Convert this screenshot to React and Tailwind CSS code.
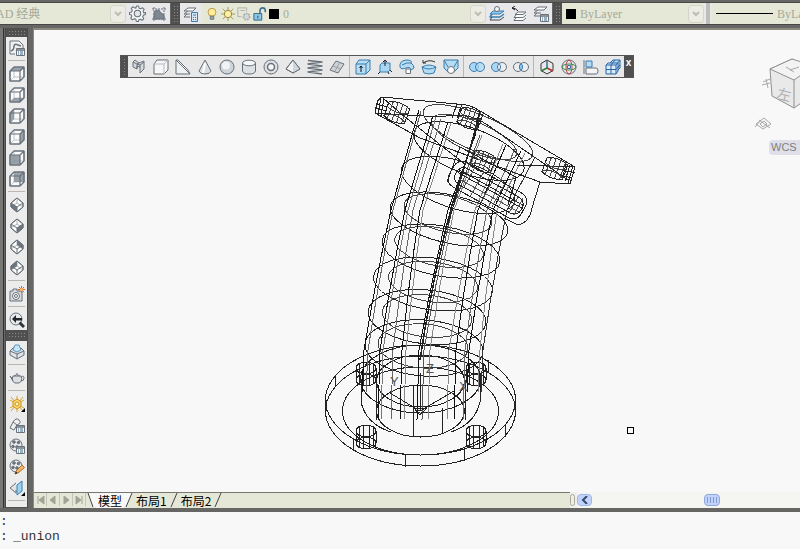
import React, { useState } from "react";

const STEEL = "#68717a";
const BLUE = "#3a7dae";

/* ---------- small toolbar icons, all on a 16x16 grid ---------- */

function Icon({ children, size = "size-4" }) {
  return (
    <svg className={`${size} shrink-0`} viewBox="0 0 16 16" fill="none" stroke={STEEL} strokeLinejoin="round" aria-hidden="true">
      {children}
    </svg>
  );
}

const FACES = {
  top: "M1 5L5 1H15L11 5Z",
  bottom: "M1 15L5 11H15L11 15Z",
  left: "M1 5L5 1V11L1 15Z",
  right: "M11 5L15 1V11L11 15Z",
  front: "M1 5H11V15H1Z",
  back: "M5 1H15V11H5Z",
};

function CubeIcon({ face }) {
  return (
    <Icon>
      <path d="M1 5L5 1H15V11L11 15H1Z" fill="#fbfbfb" />
      <path d="M5 1V11H15M5 11L1 15" stroke="#c0c5c9" />
      <path d={FACES[face]} fill="#87919a" fillOpacity="0.85" stroke="none" />
      <path d="M1 5L5 1H15V11L11 15H1ZM1 5H11V15M11 5L15 1" strokeWidth="1.2" />
    </Icon>
  );
}

const ISO_FACES = {
  sw: "M2 6L8 10V15L2 10Z",
  se: "M8 10L14 6V10L8 15Z",
  ne: "M8 1L14 6V10L8 6Z",
  nw: "M8 1L2 6V10L8 6Z",
};

function IsoIcon({ face }) {
  return (
    <Icon>
      <path d="M8 1L14 6V10L8 15L2 10V6Z" fill="#fbfbfb" />
      <path d="M2 10L8 6L14 10M8 1V6" stroke="#b4b9be" />
      <path d={ISO_FACES[face]} fill="#6d7780" stroke="none" />
      <path d="M8 1L14 6V10L8 15L2 10V6ZM2 6L8 10L14 6M8 10V15" />
    </Icon>
  );
}

const gear = (
  <>
    <path d="M7 1h2l.5 2 1.5.6 1.8-1 1.5 1.500-1 1.800.6 1.500L15.500 7v2l-2 .6-.6 1.400 1 1.900-1.500 1.500-1.800-1-1.500.6L9 15.500H7l-.6-2-1.400-.6-1.900 1-1.500-1.500 1-1.800-.6-1.500L.5 9V7l2-.5L3.100 5l-1-1.800 1.500-1.500 1.800 1L6.500 3z" fill="#f3f4f5" />
    <circle cx="8" cy="8" r="3" fill="#e4e6ea" />
  </>
);

const globe = (
  <>
    <circle cx="7" cy="7" r="6" fill="#e8eaec" />
    <circle cx="5" cy="4" r="1.300" fill={STEEL} />
    <circle cx="9.500" cy="4.500" r="1.300" fill={STEEL} />
    <circle cx="4" cy="8.500" r="1.300" fill={STEEL} />
    <circle cx="8" cy="9" r="1.300" fill={STEEL} />
  </>
);

const card = (
  <>
    <rect x="7.500" y="8.500" width="8" height="7" fill="#f5f7f8" />
    <path d="M7.500 10H15.500" strokeWidth="1.500" />
    <path d="M9 12H10M11 12H14M9 14H10M11 14H14" stroke="#3d6d8f" />
  </>
);

const ICONS = {
  gear: <Icon size="size-[17px]">{gear}</Icon>,
  workspace: (
    <Icon>
      <path d="M3 1V15M13 1V15M1 3H15M1 13H15" strokeDasharray="2 1" />
      <path d="M3 13V7Q4 4 7 4Q9 4 9 6L13 9V13Z" fill="#7c8790" />
    </Icon>
  ),
  layerProps: (
    <Icon>
      <path d="M5 2H13L10 5H1ZM1 8H7M5 5L1 8M1 11H7M4 8L1 11" fill="#fff" />
      <rect x="8.500" y="6.500" width="6" height="9" fill="#d5e6f2" stroke={BLUE} />
      <path d="M10 9H13M10 11.500H11M12 11.500H13M10 13.500H11M12 13.500H13" stroke={BLUE} />
    </Icon>
  ),
  bulb: (
    <Icon size="size-3.5">
      <circle cx="8" cy="6" r="4.500" fill="#ffef9a" stroke="#b7903c" />
      <path d="M6 10.500H10V14H6Z" fill="#a0a6ab" />
    </Icon>
  ),
  sun: (
    <Icon size="size-3.5">
      <path d="M8 0V16M0 8H16M2 2L14 14M14 2L2 14" stroke="#a69045" />
      <circle cx="8" cy="8" r="4.200" fill="#fff0a0" stroke="#8d7a3a" />
    </Icon>
  ),
  viewport: (
    <Icon size="size-3.5">
      <path d="M1 1H11V5M1 1V11H5M4 4H9" stroke="#a8acb0" />
      <circle cx="11" cy="11" r="3.500" fill="#d7d9dc" stroke="#a8acb0" strokeDasharray="2 1" strokeWidth="2" />
    </Icon>
  ),
  lock: (
    <Icon size="size-3.5">
      <path d="M8 8V4Q8 1 11 1T14 4V6" stroke="#3f7290" strokeWidth="1.800" />
      <rect x="1" y="7.500" width="9" height="7.500" fill="#8cc6e8" stroke="#285c7a" />
      <path d="M5.500 10V13" stroke="#173e57" />
    </Icon>
  ),
  layerCurrent: (
    <Icon>
      <path d="M4 5H15L11 8H1Z" fill="#8ccaf0" stroke={BLUE} />
      <path d="M3 8L1 11H11L15 8" stroke={BLUE} strokeWidth="1.500" />
      <path d="M3 11L1 14H11L15 11" stroke="#3c4a55" />
      <circle cx="8" cy="3" r="2.500" fill="#eef6fb" />
    </Icon>
  ),
  layerPrev: (
    <Icon>
      <path d="M7 6H15L12 8.500H4ZM5 9L3 11.500H12L15 9M5 12L3 14.500H12L15 12" fill="#fff" />
      <path d="M7 5Q5 2 1 2M1 2L4 0M1 2L4 4" stroke="#222" />
    </Icon>
  ),
  layerState: (
    <Icon>
      <path d="M5 1H14L11 4H1ZM1 7H8M1 10H7M5 4L1 7M4 7L1 10" fill="#fff" />
      {card}
    </Icon>
  ),
  namedViews: (
    <Icon>
      <path d="M1 1H10L14 5V8M1 1V14H6" fill="#f4f6f5" />
      <path d="M2 11Q5 10 5 6Q6 3 9 5L12 6" strokeWidth="1.500" />
      {card}
    </Icon>
  ),
  camera: (
    <Icon>
      <path d="M1 5H4V3H8V5H13V15H1Z" fill="#d9dcde" />
      <circle cx="7" cy="10" r="3.500" fill="#fafafa" />
      <circle cx="7" cy="10" r="1.500" />
      <path d="M12.500 0V7M9 3.500H16M10 1L15 6M15 1L10 6" stroke="#d0672f" />
      <circle cx="12.500" cy="3.500" r="1.500" fill="#ffc36a" stroke="none" />
    </Icon>
  ),
  back: (
    <Icon>
      <circle cx="7" cy="7" r="6" fill="#e7eaec" />
      <path d="M3 7L7 3V6H13V8.500H7V11Z" fill="#20282e" stroke="none" />
      <path d="M10.500 10.500L15 15" stroke="#2c3339" strokeWidth="3" />
    </Icon>
  ),
  hide: (
    <Icon>
      <path d="M1 7L4 4H12L15 7V11L8 15L1 11Z" fill="#dfe3e6" />
      <path d="M4 6L6 1H10L12 6L8 8Z" fill="#c8e5f6" stroke="#5b98bd" />
      <path d="M1 7L8 10L15 7M8 10V15" />
    </Icon>
  ),
  teapot: (
    <Icon>
      <path d="M4 6H12Q14 11 10 13H6Q2 11 4 6Z" fill="#dcdfe1" />
      <path d="M4 9L1 6M12 7Q15 5 15 8T12 11M5 6Q8 3 11 6M8 4V3M1 6L4 11" />
    </Icon>
  ),
  light: (
    <Icon>
      <path d="M8 0V16M1 4L15 12M15 4L1 12M2 1L14 15M14 1L2 15" stroke="#dba532" />
      <path d="M8 3L12 5.500V10.500L8 13L4 10.500V5.500Z" fill="#ffd968" stroke="#c99325" />
      <circle cx="8" cy="8" r="2" fill="#fff8c8" stroke="#c99325" />
      <path d="M16 12V16H12Z" fill="#000" stroke="none" />
    </Icon>
  ),
  lightList: (
    <Icon>
      <path d="M1 11L4 5Q7 0 10 3T8 8L5 13Z" fill="#eceeef" />
      <path d="M4 5L8 8" />
      {card}
    </Icon>
  ),
  materials: <Icon>{globe}{card}</Icon>,
  materialEdit: (
    <Icon>
      {globe}
      <path d="M6 15L7 12L13 6L15.500 8.500L9 14Z" fill="#f3b568" stroke="#a9702c" />
      <path d="M6 15L7 12.500L8.500 14Z" fill="#222" stroke="none" />
    </Icon>
  ),
  mapping: (
    <Icon>
      <path d="M7 3L1 8L7 13V10" fill="#dfe3e6" />
      <path d="M8 5L13 1V11L8 15Z" fill="#9ed4f3" stroke={BLUE} />
      <path d="M16 12V16H12Z" fill="#000" stroke="none" />
    </Icon>
  ),
  polysolid: (
    <Icon>
      <path d="M2 3L4 1L8 4L13 2V10L9 14V8L6 7V10L2 8Z" fill="#d5d9dc" />
      <path d="M2 3L6 5V10M6 5L8 4M9 8L9 6L13 3M9 6L6 5" />
    </Icon>
  ),
  box: (
    <Icon>
      <path d="M1 5L4 1H15V11L11 15H1Z" fill="#f6f7f8" />
      <path d="M11 5H1M11 5V15M11 5L15 1" stroke="#b5bac0" />
    </Icon>
  ),
  wedge: <Icon><path d="M1 1V15H15L13 11L3 1ZM1 1L15 15" fill="#eef0f1" /></Icon>,
  cone: <Icon><path d="M8 1L2 12Q3 15 8 15T14 12Z" fill="#d9dde0" /><path d="M8 4L6 14" stroke="#fff" strokeWidth="2" /></Icon>,
  sphere: <Icon><circle cx="8" cy="8" r="7" fill="#cfd5da" /><circle cx="7" cy="6.500" r="4" fill="#f1f3f4" stroke="none" /></Icon>,
  cylinder: <Icon><path d="M1.500 4V12Q2 15 8 15T14.500 12V4" fill="#dde1e4" /><ellipse cx="8" cy="4" rx="6.500" ry="2.800" fill="#f7f8f8" /></Icon>,
  torus: <Icon><circle cx="8" cy="8" r="7" fill="#e0e3e6" /><circle cx="8" cy="8" r="3.500" fill="#f8f8f8" strokeWidth="1.500" /></Icon>,
  pyramid: <Icon><path d="M8 1L1 10L8 14L15 10Z" fill="#f0f2f3" /><path d="M8 1L8 14L15 10Z" fill="#d0d5d9" stroke="none" /><path d="M8 1L1 10L8 14L15 10Z" /></Icon>,
  helix: <Icon><path d="M1 1.500L15 3L1 5L15 7L1 9L15 11L1 13L15 15" strokeWidth="1.500" /></Icon>,
  planar: <Icon><path d="M1 11L7 2L15 5L9 14Z" fill="#cfd3d6" /><path d="M4 7L12 10M6 12L11 3" stroke="#9aa1a7" /></Icon>,
  extrude: (
    <Icon>
      <path d="M1 5L4 1H15V11L11 15H1Z" fill="#b5dcf3" stroke={BLUE} />
      <path d="M1 5H11V15M11 5L15 1" stroke={BLUE} />
      <path d="M6 13V7M4.500 9L6 7L7.500 9" stroke="#112" />
    </Icon>
  ),
  presspull: (
    <Icon>
      <path d="M3 6L5 4H13V11L11 13H3Z" fill="#a9d6f1" stroke={BLUE} />
      <path d="M8 7V1M6 3L8 1L10 3" stroke="#223" />
      <path d="M3 13L1 15M11 13L12 15M13 11L15 13" stroke="#223" />
    </Icon>
  ),
  sweep: (
    <Icon>
      <path d="M1 8Q0 2 7 1Q14 1 12 4Q15 6 15 9L12 11Q11 7 7 9Q2 11 1 8Z" fill="#b5dcf3" stroke={BLUE} />
      <path d="M3 6Q8 3 12 4" stroke={BLUE} />
      <rect x="7" y="10" width="4.500" height="4.500" fill="#fff" />
    </Icon>
  ),
  revolve: (
    <Icon>
      <path d="M1 8Q8 4 15 8L13 14Q8 16 3 14Z" fill="#b5dcf3" stroke={BLUE} />
      <path d="M1 8Q8 12 15 8" stroke={BLUE} />
      <path d="M2 4Q8 0 14 3M2 4V1M2 4L5 4" stroke="#333" />
    </Icon>
  ),
  loft: (
    <Icon>
      <path d="M1 1H15V9L11 13H5L1 9Z" fill="#b5dcf3" stroke={BLUE} />
      <path d="M1 1L5 8M15 1L11 8" stroke={BLUE} />
      <circle cx="8" cy="11" r="3.500" fill="#fff" />
    </Icon>
  ),
  union: (
    <Icon>
      <circle cx="5" cy="8" r="4.500" fill="#a9d8f5" stroke={BLUE} />
      <circle cx="11" cy="8" r="4.500" fill="#a9d8f5" fillOpacity="0.700" stroke={BLUE} />
    </Icon>
  ),
  subtract: (
    <Icon>
      <circle cx="5" cy="8" r="4.500" fill="#a9d8f5" stroke={BLUE} />
      <circle cx="11" cy="8" r="4.500" fill="#ecedef" />
      <path d="M8 4.600A4.500 4.500 0 0 1 8 11.400" stroke={BLUE} />
    </Icon>
  ),
  intersect: (
    <Icon>
      <circle cx="5" cy="8" r="4.500" fill="#ecedef" />
      <circle cx="11" cy="8" r="4.500" fill="#ecedef" />
      <path d="M8 4.600A4.500 4.500 0 0 1 8 11.400A4.500 4.500 0 0 1 8 4.600" fill="#8cccf5" stroke={BLUE} />
    </Icon>
  ),
  move3d: (
    <Icon>
      <path d="M8 1L14 4.500V11.500L8 15L2 11.500V4.500Z" stroke="#333" />
      <path d="M8 9V2" stroke="#2f6f9f" strokeWidth="1.500" />
      <path d="M8 9L2 12" stroke="#2f7d3a" strokeWidth="1.500" />
      <path d="M8 9L14 12" stroke="#b03030" strokeWidth="1.500" />
    </Icon>
  ),
  rotate3d: (
    <Icon>
      <circle cx="8" cy="8" r="7" />
      <ellipse cx="8" cy="8" rx="3" ry="7" stroke="#c04343" />
      <ellipse cx="8" cy="8" rx="7" ry="3" stroke="#3c8a4a" />
      <rect x="6.500" y="6.500" width="3" height="3" stroke="#3d6fa8" />
    </Icon>
  ),
  align3d: (
    <Icon>
      <path d="M1 1V15M3 9H13Q15 9 15 12T13 15H3Z" fill="#f3f4f5" />
      <rect x="3" y="2" width="6" height="6" fill="#b5dcf3" stroke={BLUE} />
    </Icon>
  ),
  array3d: (
    <Icon>
      <path d="M5 4L8 1H15V9L12 12" fill="#b5dcf3" stroke="#2b62a5" />
      <path d="M1 6L3 4H13V12L11 15H1Z" fill="#d8ebf8" stroke="#2b62a5" />
      <path d="M1 6H11V15M11 6L15 1M1 10.500H11L15 6M6 6V15M6 6L10 1" stroke="#2b62a5" />
    </Icon>
  ),
};

/* ---------- toolbar pieces ---------- */

const Grip = ({ className }) => (
  <div className={`flex shrink-0 items-center justify-center bg-[#505050] ${className}`}>
    <div className="size-full border-2 border-[#505050] bg-[radial-gradient(#8a8a8a_1px,transparent_1px)] bg-[size:3px_3px]" />
  </div>
);

function Tool({ label, className = "", children }) {
  return (
    <button type="button" title={label} aria-label={label} className={`flex shrink-0 items-center justify-center hover:bg-white ${className}`}>
      {children}
    </button>
  );
}

function Combo({ label, options, className = "", lead, arrow = true }) {
  return (
    <div className={`flex h-full items-center overflow-hidden bg-[#e5e8d7] ${className}`}>
      {lead}
      <select
        aria-label={label}
        className="min-w-12 flex-1 appearance-none bg-transparent font-['Liberation_Serif','Noto_Sans_CJK_SC',serif] text-xs text-[#a5a897] outline-none"
      >
        {options.map((o) => <option key={o}>{o}</option>)}
      </select>
      {arrow && (
        <span className="flex h-[18px] w-4 shrink-0 items-center justify-center rounded-sm border border-[#d5d5cb] bg-[#ecece4]">
          <svg className="w-2" viewBox="0 0 8 6" fill="none" stroke="#bcbcb0" strokeWidth="2"><path d="M1 1L4 4L7 1" /></svg>
        </span>
      )}
    </div>
  );
}

function TopBar() {
  return (
    <header className="flex h-7 shrink-0 items-start overflow-hidden bg-[#666665] pt-0.5">
      <div className="flex h-[23px] w-full border-y border-[#484848]">
        <div className="flex w-[170px] shrink-0 bg-[#e8e8ea]">
          <Combo label="Workspace" options={["AD 经典"]} className="-ml-1 w-[130px]" />
          <Tool label="Workspace settings" className="w-[22px]">{ICONS.gear}</Tool>
          <Tool label="My workspace" className="w-[22px]">{ICONS.workspace}</Tool>
        </div>
        <Grip className="ml-px w-[9px]" />
        <div className="flex w-[372px] shrink-0 bg-[#e8e8ea]">
          <Tool label="Layer properties" className="w-[22px]">{ICONS.layerProps}</Tool>
          <Combo
            label="Layer"
            options={["0"]}
            className="flex-1 pl-[3px]"
            lead={
              <span className="mr-1 flex items-center gap-0.5">
                {ICONS.bulb}{ICONS.sun}{ICONS.viewport}{ICONS.lock}
                <span className="size-2.5 bg-black" />
              </span>
            }
          />
          <Tool label="Make layer current" className="w-[22px]">{ICONS.layerCurrent}</Tool>
          <Tool label="Layer previous" className="w-[22px]">{ICONS.layerPrev}</Tool>
          <Tool label="Layer states" className="w-[22px]">{ICONS.layerState}</Tool>
        </div>
        <Grip className="ml-px w-[9px]" />
        <Combo
          label="Color"
          options={["ByLayer"]}
          className="w-[142px] shrink-0 pl-1"
          lead={<span className="mr-1 size-2.5 bg-black" />}
        />
        <div className="w-2 shrink-0 border-x-2 border-[#e8e8ea] bg-[#bdbdba]" />
        <Combo
          label="Linetype"
          options={["ByLayer"]}
          arrow={false}
          className="min-w-0 flex-1 pl-1"
          lead={<span className="mr-1 h-px w-[57px] shrink-0 bg-black" />}
        />
      </div>
    </header>
  );
}

const VIEW_TOOLS = [
  ["Named views", ICONS.namedViews],
  null,
  ["Top", <CubeIcon face="top" />],
  ["Bottom", <CubeIcon face="bottom" />],
  ["Left", <CubeIcon face="left" />],
  ["Right", <CubeIcon face="right" />],
  ["Front", <CubeIcon face="front" />],
  ["Back", <CubeIcon face="back" />],
  null,
  ["SW isometric", <IsoIcon face="sw" />],
  ["SE isometric", <IsoIcon face="se" />],
  ["NE isometric", <IsoIcon face="ne" />],
  ["NW isometric", <IsoIcon face="nw" />],
  null,
  ["Create camera", ICONS.camera],
  null,
  ["Previous view", ICONS.back],
];

const RENDER_TOOLS = [
  ["Hide", ICONS.hide],
  null,
  ["Render", ICONS.teapot],
  null,
  ["Lights", ICONS.light],
  ["Light list", ICONS.lightList],
  ["Materials", ICONS.materials],
  ["Material editor", ICONS.materialEdit],
  ["Mapping", ICONS.mapping],
  null,
];

function ToolColumn({ tools }) {
  return (
    <div className="flex flex-col bg-[#ececed]">
      {tools.map((t, i) =>
        t ? (
          <Tool key={i} label={t[0]} className="h-[21px] w-full">{t[1]}</Tool>
        ) : (
          <div key={i} className="mx-0.5 my-0.5 h-px bg-[#b9b8ae]" />
        )
      )}
    </div>
  );
}

function SideBar() {
  return (
    <aside className="flex shrink-0 bg-[#666665]">
      <div className="mr-px w-1 border-r border-[#333] bg-[#777776]" />
      <div className="w-[23px] overflow-hidden border-x border-[#4a4a4a]">
        <Grip className="h-[9px]" />
        <ToolColumn tools={VIEW_TOOLS} />
        <Grip className="h-[11px]" />
        <ToolColumn tools={RENDER_TOOLS} />
        <div className="h-1 bg-[#ececed]" />
        <Grip className="h-2" />
      </div>
      <div className="w-[5px]" />
    </aside>
  );
}

const MODEL_TOOLS = [
  ["polysolid", "box", "wedge", "cone", "sphere", "cylinder", "torus", "pyramid", "helix", "planar"],
  ["extrude", "presspull", "sweep", "revolve", "loft"],
  ["union", "subtract", "intersect"],
  ["move3d", "rotate3d", "align3d", "array3d"],
];

function ModelingToolbar() {
  return (
    <div className="absolute top-[25px] left-[86px] flex h-[23px] border border-[#555] bg-[#e8e8e9]">
      <Grip className="w-[7px]" />
      {MODEL_TOOLS.map((group, i) => (
        <React.Fragment key={i}>
          {i > 0 && <div className="mr-0.5 ml-px w-px bg-[#bdb9a6]" />}
          {group.map((name) => (
            <Tool key={name} label={name} className="w-[22px]">{ICONS[name]}</Tool>
          ))}
        </React.Fragment>
      ))}
      <button type="button" aria-label="Close" className="w-[9px] bg-[#505050] pb-2 font-['Liberation_Sans',sans-serif] text-[10px] leading-3 font-bold text-white">
        x
      </button>
    </div>
  );
}

/* ---------- wireframe model ---------- */

// centre x, centre y, radius, half height, tilt
const RINGS = [
  [469, 151, 58, 23, 20], [458, 185, 59, 24, 17], [449, 219, 60, 24, 13],
  [441, 251, 60, 25, 11], [433, 284, 60, 26, 8], [427, 317, 59, 27, 6], [424, 348, 59, 28, 4],
];

const INNER_RINGS = [
  [448, 214, 45, 18, 13], [439, 247, 45, 19, 11],
  [433, 282, 45, 20, 8], [427, 316, 45, 21, 6], [423, 346, 45, 22, 4],
  [478, 133, 59, 18, 23], [474, 137, 46, 15, 23],
];

// x of each generator line at y=210 and y=350, and its tone
const GENERATORS = [
  [391, 364, "#111"], [393, 368, "#666"], [405, 380, "#111"], [408, 383, "#777"], [413, 393, "#666"], [420, 402, "#111"],
  [423, 406, "#888"], [448, 419, "#111"], [452, 424, "#555"], [454, 430, "#888"], [475, 449, "#888"],
  [478, 456, "#111"], [487, 465, "#666"], [493, 469, "#111"], [497, 480, "#888"], [507, 483, "#333"],
];

const HOLES = [[366, 368], [476, 368], [366, 431], [476, 431]];

function generatorPath([a, b]) {
  const top = a + 28;
  const topY = Math.round(111 + (top - 421) * 0.4);
  const foot = Math.round(b - (a - b) * 0.12);
  const footY = foot > 375 && foot < 466 ? 420 : 392;
  return `M${top} ${topY}L${a} 210Q${Math.round((a + b) / 2) - 2} 278 ${b} 350L${b - 2} ${footY}`;
}

function BoltHole({ x, y }) {
  return (
    <g>
      <ellipse cx={x} cy={y} rx="10" ry="6" />
      <ellipse cx={x} cy={y + 12} rx="10" ry="6" />
      <path d={`M${x - 10} ${y}V${y + 12}M${x + 10} ${y}V${y + 12}M${x - 7} ${y - 4}V${y + 16}M${x - 3} ${y - 5}V${y + 17}M${x + 3} ${y - 6}V${y + 17}M${x + 7} ${y - 4}V${y + 16}`} />
    </g>
  );
}

function PlateHole({ x, y }) {
  return (
    <g transform={`translate(${x} ${y}) rotate(20)`}>
      <path d="M-11 -7Q0 -12 11 -7V8Q0 13 -11 8Z" />
      <path d="M-11 -2Q0 3 11 -2M-7 -9V10M-2 -10V10M3 -10V10M8 -9V9M-11 7Q0 1 11 7" stroke="#444" />
    </g>
  );
}

function Wireframe() {
  return (
    <svg
      className="absolute top-[60px] left-[286px] h-[385px] w-[270px]"
      viewBox="320 90 270 385"
      fill="none"
      stroke="#222"
      shapeRendering="crispEdges"
      role="img"
      aria-label="Bent pipe with two flanges"
    >
      {/* base flange */}
      <ellipse cx="420.500" cy="400" rx="95" ry="55" />
      <ellipse cx="420.500" cy="411" rx="95" ry="55" />
      <ellipse cx="420.500" cy="411" rx="78" ry="44" />
      <ellipse cx="420.500" cy="379" rx="60" ry="34" />
      <path d="M361 379V402Q366 424 391 432M480 379V402Q475 424 451 432" />
      <ellipse cx="420.500" cy="381" rx="44" ry="26" />
      <ellipse cx="420.500" cy="411" rx="44" ry="26" />
      <path d="M326 400V411M515 400V411M335 375V387M488 360V372M353 438V450M405 455V467M464 449V461M505 425V437M376 380V420M465 380V420M413 386V437M442 408V433" />
      {HOLES.map(([x, y]) => <BoltHole key={`${x}-${y}`} x={x} y={y} />)}

      {/* bellows */}
      {RINGS.map(([x, y, rx, ry, tilt]) => (
        <ellipse key={`${x}-${y}`} cx={x} cy={y} rx={rx} ry={ry} transform={`rotate(${tilt} ${x} ${y})`} />
      ))}
      {INNER_RINGS.map(([x, y, rx, ry, tilt]) => (
        <ellipse key={`${x}-${y}`} cx={x} cy={y} rx={rx} ry={ry} stroke="#444" transform={`rotate(${tilt} ${x} ${y})`} />
      ))}
      {GENERATORS.map((g) => <path key={g[0]} d={generatorPath(g)} stroke={g[2]} />)}
      <path d="M480 118L452 205Q432 280 420 360" strokeWidth="1.500" />

      {/* top plate */}
      <path d="M382 97L457 104Q470 104 480 111L575 167L570 184L540 182L518 174L420 138L375 113Q377 98 382 97Z" />
      <path d="M375 113L440 117Q468 111 486 124L568 180M384 99L405 117L466 165M517 165L575 167M480 111L476 123M457 104L452 118M462 104L457 118" />
      <path d="M378 100L375 112M381 98L378 114M384 98L381 116M376 104L388 107M375 108L387 111M573 166L568 183M570 165L565 181M566 164L562 180M562 170L575 173M560 175L572 178" />
      <PlateHole x={397} y={112} />
      <PlateHole x={470} y={118} />
      <PlateHole x={555} y={168} />

      {/* side nozzle */}
      <PlateHole x={483} y={161} />
      <path d="M540 182L532 208Q529 223 518 225L504 218M460 147L516 177L508 205M460 147L447 182M480 112L448 225" />
      <g transform="translate(487 191) rotate(29)">
        <rect x="-41" y="-15" width="82" height="28" rx="9" />
        <rect x="-36" y="-10" width="75" height="18" rx="8" />
        <path d="M-36 -5H40M-34 -2H40" />
        <path d="M-30 3H38M30 -11V8M35 -11V8M-22 -15V8M-12 -15V12M0 -15V12M12 -15V12" stroke="#555" />
      </g>

      {/* ucs marker */}
      <path d="M420.500 373V411M420 411L390 393M420 411L454 391M414 408H427L420 415Z" />
      <g className="font-['Liberation_Sans',sans-serif] text-[13px]" fill="#555" stroke="none">
        <text x="426" y="373">Z</text>
        <text x="390" y="386">Y</text>
        <text x="459" y="391">X</text>
      </g>
    </svg>
  );
}

function ViewCube() {
  return (
    <div className="absolute top-6 right-0 flex w-[52px] flex-col items-end">
      <svg className="h-[76px] w-full" viewBox="0 0 52 76" fill="none" stroke="#909090" aria-hidden="true">
        <path d="M22 15L44 5L66 15V40L46 54L24 42Z" fill="#e9e9e9" />
        <path d="M22 15L46 26L66 12L44 5Z" fill="#f3f3f3" />
        <path d="M46 26V54" />
        <path d="M15 28L22 25M14 31L22 29M18 25L20 34M8 70L16 64L23 70L15 75ZM12 70L16 67L19 70L15 73ZM7 73L13 66M11 66L22 74M38 13L46 18M42 16L51 13" stroke="#a8a8a8" />
        <text x="28" y="44" transform="rotate(14 28 44)" fill="#b0b0b0" stroke="none" className="font-['Noto_Sans_CJK_SC',sans-serif] text-[14px]">左</text>
      </svg>
      <button type="button" className="mt-2.5 h-[15px] w-[31px] rounded-l bg-[#dfdfe9] pl-0.5 text-left font-['Liberation_Sans',sans-serif] text-[11px] leading-[15px] text-[#808080]">
        WCS
      </button>
    </div>
  );
}

/* ---------- bottom tabs, scroll bar, command line ---------- */

const NAV = [
  ["First layout", "M3 1V9M9 1L4 5L9 9Z"],
  ["Previous layout", "M7 1L2 5L7 9Z"],
  ["Next layout", "M3 1L8 5L3 9Z"],
  ["Last layout", "M2 1L7 5L2 9ZM8 1V9"],
];

const Slant = ({ d, left, right }) => (
  <svg className="h-3.5 w-2.5 shrink-0" viewBox="0 0 10 14" aria-hidden="true">
    <rect width="10" height="14" fill="#e5e8d7" />
    {left && <path d="M0 0H8L2 14H0Z" fill="#f8f8f8" />}
    {right && <path d="M2 0H10V14H7Z" fill="#f8f8f8" />}
    <path d={d} fill="none" stroke="#444" />
  </svg>
);

function LayoutTabs() {
  const [tab, setTab] = useState("模型");
  const tabClass = (name) => `h-full px-0.5 leading-[14px] ${tab === name ? "bg-[#f8f8f8]" : ""}`;
  return (
    <nav className="flex h-4 shrink-0 bg-[#f0f0ea]">
      <div className="flex w-[70%] items-start border-t border-[#77776f] bg-[#e5e8d7] font-['Noto_Sans_CJK_SC',sans-serif] text-xs text-black">
        {NAV.map(([label, d]) => (
          <button key={label} type="button" aria-label={label} className="flex h-[13px] w-[13px] shrink-0 items-center justify-center border-r border-[#c4c5b8]">
            <svg className="size-2.5" viewBox="0 0 10 10" fill="#a2a397" stroke="#a2a397"><path d={d} /></svg>
          </button>
        ))}
        <Slant d="M2 0L7 14" right />
        <button type="button" onClick={() => setTab("模型")} className={tabClass("模型")}>模型</button>
        <Slant d="M8 0L2 14" left />
        <button type="button" onClick={() => setTab("布局1")} className={tabClass("布局1")}>布局1</button>
        <Slant d="M8 0L2 14" />
        <button type="button" onClick={() => setTab("布局2")} className={tabClass("布局2")}>布局2</button>
        <Slant d="M8 0L2 14" />
      </div>
      <div className="mt-0.5 mr-0.5 h-3 w-[5px] shrink-0 rounded-sm border border-[#aaa99c] bg-[#eeeee6]" />
      <div className="flex min-w-0 flex-1 items-center bg-[#f5f5f1]">
        <button type="button" aria-label="Scroll left" className="flex h-3 w-[15px] shrink-0 items-center justify-center rounded-sm border border-[#9fb5e4] bg-[#c4d3fb]">
          <svg className="size-2" viewBox="0 0 8 8" fill="none" stroke="#33496f" strokeWidth="2"><path d="M6 0L2 4L6 8" /></svg>
        </button>
        <div className="flex flex-1 justify-center pl-8">
          <div className="flex h-3 w-4 items-center justify-center gap-0.5 rounded-sm border border-[#8da6dc] bg-[#c4d3fb]">
            {[0, 1, 2, 3].map((i) => <span key={i} className="h-1.5 w-px bg-[#7f98d1]" />)}
          </div>
        </div>
      </div>
    </nav>
  );
}

export default function App() {
  return (
    <div className="flex h-screen flex-col overflow-hidden bg-[#f8f8f8]">
      <TopBar />
      <div className="flex min-h-0 flex-1">
        <SideBar />
        <main className="flex min-w-0 flex-1 flex-col border-t-2 border-l border-[#8d8b80]">
          <div className="relative min-h-0 flex-1 overflow-hidden">
            <ModelingToolbar />
            <Wireframe />
            <ViewCube />
            {/* pick box */}
            <div className="absolute top-[397px] left-[593px] size-[7px] border border-black" />
          </div>
          <LayoutTabs />
        </main>
      </div>
      <footer className="h-[41px] shrink-0 border-t-4 border-[#666665] bg-[#f8f8f8] pt-0.5 font-['Liberation_Mono',monospace] text-[13px] leading-[15px] text-[#333]">
        <p>:</p>
        <div className="flex">
          <label htmlFor="command" className="w-[13px] shrink-0">:</label>
          <input id="command" defaultValue="_union" className="min-w-0 flex-1 bg-transparent outline-none" />
        </div>
      </footer>
    </div>
  );
}
